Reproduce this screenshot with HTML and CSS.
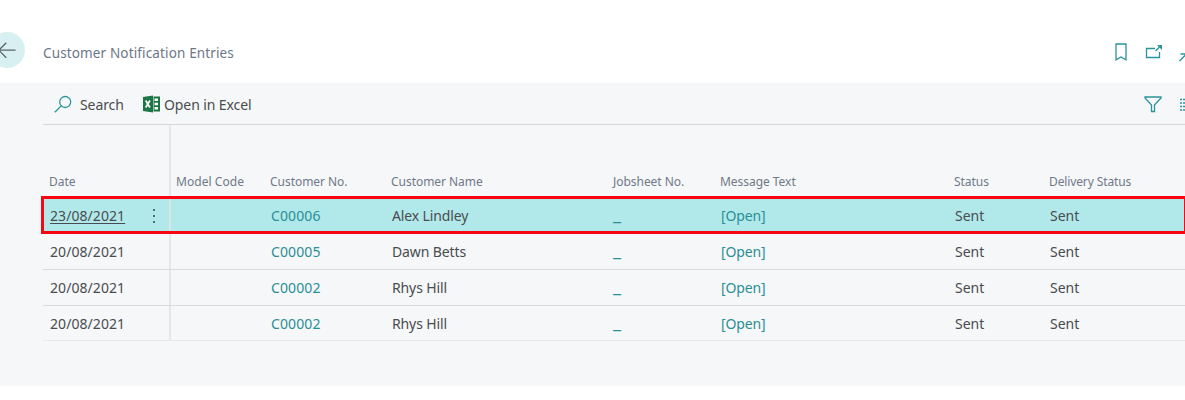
FILE: index.html
```html
<!DOCTYPE html>
<html lang="en">
<head>
<meta charset="utf-8">
<title>Customer Notification Entries</title>
<link rel="stylesheet" href="styles.css">
</head>
<body>
<header class="titlebar">
  <div class="back"><svg width="36" height="36" viewBox="0 0 36 36"><path d="M26.500 18.200H11M17.300 10.700l-7.500 7.500 7.500 7.500"/></svg></div>
  <h1 class="title">Customer Notification Entries</h1>
  <svg class="icon bookmark" width="12" height="18" viewBox="0 0 12 18"><path d="M1 1h10v15.800l-5-2.800-5 2.800z"/></svg>
  <svg class="icon popout" width="18" height="16" viewBox="0 0 18 16"><path d="M10 4.500H1.500v9h13V8M10.500 7l4-4"/><path class="fill" d="M12 1h5v5z"/></svg>
  <svg class="icon collapse" width="12" height="12" viewBox="0 0 12 12"><path d="M.5 10l6-6M1.500 3H7.500v6"/></svg>
</header>
<main class="page">
  <div class="toolbar">
    <svg class="icon search" width="18" height="18" viewBox="0 0 18 18"><circle cx="11.200" cy="7" r="5.500"/><path d="M7.200 10.900L.8 17.300"/></svg>
    <span class="action act-search">Search</span>
    <svg class="excel" width="18" height="18" viewBox="0 0 18 18"><path fill="#1c7544" d="M0 2L10 .5v17L0 16zM10.500 1.500h6.500v15h-6.500z"/><path stroke="#fff" stroke-width="1.700" fill="none" d="M2.700 5.500l4.200 7M6.900 5.500l-4.200 7"/><path fill="#fff" d="M11.500 3.500h3.500v2.500h-3.500zM11.500 7.800h3.500v2.500h-3.500zM11.500 12h3.500v2.500h-3.500z"/></svg>
    <span class="action act-excel">Open in Excel</span>
    <svg class="icon filter" width="18" height="17" viewBox="0 0 18 17"><path d="M1 1h16v1l-6.500 7v6.500h-3V9L1 2z"/></svg>
    <svg class="icon list" width="12" height="14" viewBox="0 0 12 14"><path d="M0 2.500h2M3 2.500h9M0 6h2M3 6h9M0 9.500h2M3 9.500h9M0 13h2M3 13h9"/></svg>
  </div>
  <div class="table">
    <div class="row head"><span class="h-date">Date</span><span class="h-model">Model Code</span><span class="h-no">Customer No.</span><span class="h-name">Customer Name</span><span class="h-job">Jobsheet No.</span><span class="h-msg">Message Text</span><span class="h-status">Status</span><span class="h-del">Delivery Status</span></div>
    <div class="row entry selected"><span class="date"><u>23/08/2021</u><svg class="dots" width="4" height="16" viewBox="0 0 4 16"><path d="M1 1h2v2H1zM1 7h2v2H1zM1 13h2v2H1z"/></svg></span><span></span><span class="link code">C00006</span><span class="name">Alex Lindley</span><span class="link dash">_</span><span class="link open">[Open]</span><span class="sent">Sent</span><span class="sent">Sent</span></div>
    <div class="row entry"><span class="date">20/08/2021</span><span></span><span class="link code">C00005</span><span class="name">Dawn Betts</span><span class="link dash">_</span><span class="link open">[Open]</span><span class="sent">Sent</span><span class="sent">Sent</span></div>
    <div class="row entry"><span class="date">20/08/2021</span><span></span><span class="link code">C00002</span><span class="name">Rhys Hill</span><span class="link dash">_</span><span class="link open">[Open]</span><span class="sent">Sent</span><span class="sent">Sent</span></div>
    <div class="row entry last"><span class="date">20/08/2021</span><span></span><span class="link code">C00002</span><span class="name">Rhys Hill</span><span class="link dash">_</span><span class="link open">[Open]</span><span class="sent">Sent</span><span class="sent">Sent</span></div>
  </div>
</main>
</body>
</html>
```

FILE: styles.css
```css
* { box-sizing: border-box; }
body { margin: 0; width: 1185px; height: 400px; overflow: hidden; background: #fff; color: #4a4c4e; font: 14px/20px "Noto Sans", sans-serif; }
svg { display: block; flex: none; }
.titlebar { display: flex; height: 83px; padding-top: 32px; align-items: flex-start; overflow: hidden; }
.back { width: 36px; height: 36px; margin-left: -11px; border-radius: 50%; background: #d8f0f2; flex: none; }
.back path { fill: none; stroke: #5b666b; stroke-width: 1.3; }
.title { margin: 11px 0 0 18px; width: 1072px; flex: none; font-size: 13.5px; font-weight: 400; line-height: 20px; color: #6c7686; letter-spacing: .14px; }
.icon { fill: none; stroke: #2b949b; stroke-width: 1.3; }
.icon .fill { fill: #2b949b; stroke: none; }
.bookmark { margin-top: 11px; }
.popout { margin: 12px 0 0 18px; }
.collapse { margin: 19px 0 0 16px; }
.page { height: 303px; background: #f5f7f9; padding-left: 43px; overflow: hidden; }
.toolbar { display: flex; align-items: center; height: 42px; padding: 1px 0 0 11px; border-bottom: 1px solid #d5d8da; }
.action { padding-top: 2px; letter-spacing: -.1px; }
.act-search { margin-left: 8px; width: 63px; }
.act-excel { margin-left: 3px; width: 980px; }
.action, .filter, .list { flex: none; }
.list { margin-left: 18px; }
.table { background: linear-gradient(#e5e7e8, #e5e7e8) 126px 0 / 2px 100% no-repeat; }
.row { display: grid; grid-template-columns: 127px 94px 121px 221px 108px 234px 95px 142px; width: 1142px; white-space: nowrap; }
.row > span { padding-left: 7px; }
.head { height: 71px; padding-top: 47px; font-size: 12px; color: #707988; }
.head > span { margin-left: -1px; letter-spacing: -.04px; }
.head > .h-model { letter-spacing: .06px; }
.head > .h-job { padding-left: 8px; }
.head > .h-del { letter-spacing: -.12px; }
.entry { height: 36px; align-items: center; border-bottom: 1px solid #d9dcde; }
.selected { width: 1146px; height: 38px; margin-left: -2px; padding-top: 2px; border: 3px solid #f90613; background: linear-gradient(#d9e6e6, #d9e6e6) 125px 0 / 2px 100% no-repeat #b1e9eb; }
.selected > span { margin-left: -1px; }
.last { height: 35px; padding-top: 1px; border-color: #e7e9ea; }
.row > .date { display: flex; align-items: center; letter-spacing: .07px; }
u { text-underline-offset: 2px; }
.dots { margin-left: 27px; fill: #526e70; }
.link { color: #2b8f96; }
.code { letter-spacing: .1px; }
.name, .open { letter-spacing: -.12px; }
.dash { font-size: 18px; line-height: 18px; padding-bottom: 6px; }
```
